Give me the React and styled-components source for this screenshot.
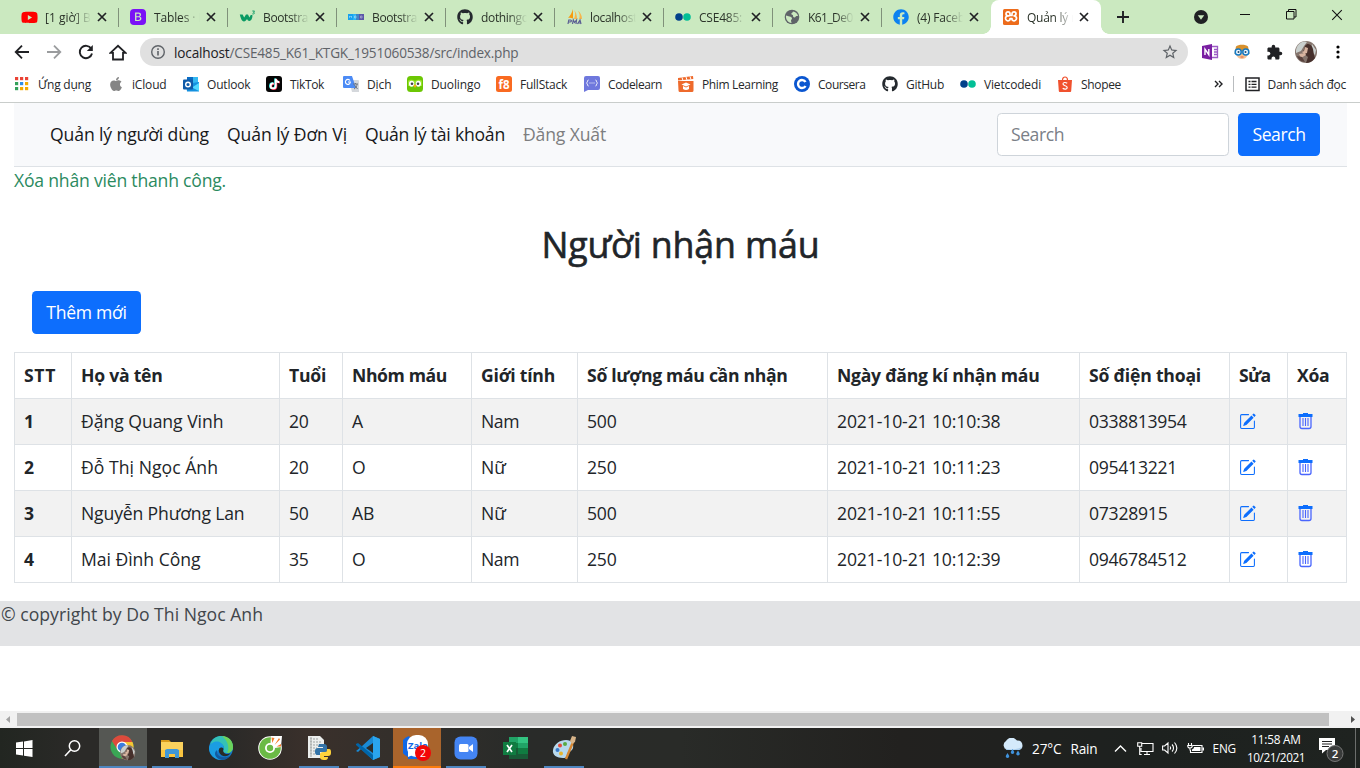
import React, { useLayoutEffect, useRef, useState } from "react";
import styled, { createGlobalStyle, css } from "styled-components";
import { FaApple, FaGithub, FaYoutube, FaTiktok, FaFacebook } from "react-icons/fa";
import { BsBootstrapFill, BsPencilSquare } from "react-icons/bs";
import { MdStarBorder, MdExtension } from "react-icons/md";

const Global = createGlobalStyle`
  * { box-sizing: border-box; }
  html, body { margin: 0; padding: 0; overflow: hidden; background: #fff; }
  body { font-family: "Open Sans", "Noto Sans", sans-serif; color: #212529; }
  svg { display: block; flex: none; }
`;

const Fitted = styled.span`
  display: inline-block;
  white-space: nowrap;
`;

/* Tightens or loosens the tracking so that a label takes the given width. */
function Fit({ w, children }) {
  const ref = useRef(null);
  const [spacing, setSpacing] = useState(0);
  useLayoutEffect(() => {
    const natural = ref.current.getBoundingClientRect().width;
    setSpacing((w - natural) / String(children).length);
  }, [w, children]);
  return <Fitted ref={ref} style={{ letterSpacing: spacing + "px" }}>{children}</Fitted>;
}

const Screen = styled.div`
  width: 1360px;
  height: 768px;
  display: flex;
  flex-direction: column;
  overflow: hidden;
  background: #fff;
`;

/* ---------- browser chrome ---------- */
const TabStrip = styled.div`
  height: 34px;
  flex: none;
  display: flex;
  padding-left: 10px;
  background: #cbe9c0;
`;
const TabBox = styled.div`
  width: ${p => (p.$active ? 110 : 109)}px;
  flex: none;
  height: 34px;
  display: flex;
  align-items: center;
  padding-left: 11px;
  position: relative;
  font-size: 12px;
  color: #2b3329;
  ${p => p.$active && css`
    background: #fff;
    border-radius: 8px 8px 0 0;
    padding-left: 12px;
    &::before, &::after {
      content: "";
      position: absolute;
      bottom: 0;
      width: 8px;
      height: 8px;
    }
    &::before { left: -8px; background: radial-gradient(circle at 0 0, transparent 7.5px, #fff 8px); }
    &::after { right: -8px; background: radial-gradient(circle at 100% 0, transparent 7.5px, #fff 8px); }
  `}
`;
const TabIcon = styled.span`
  width: 16px;
  height: 16px;
  flex: none;
  display: flex;
  align-items: center;
  justify-content: center;
`;
const TabTitle = styled.span`
  width: 46px;
  margin: 0 6px 0 8px;
  overflow: hidden;
  white-space: nowrap;
  flex: none;
  -webkit-mask-image: linear-gradient(90deg, #000 60%, transparent 100%);
  mask-image: linear-gradient(90deg, #000 60%, transparent 100%);
`;
const TabLine = styled.i`
  position: absolute;
  right: 0;
  top: 8px;
  width: 1px;
  height: 19px;
  background: #80917a;
`;
const NewTab = styled.div`
  width: 44px;
  height: 34px;
  display: flex;
  align-items: center;
  justify-content: center;
`;
const DropSlot = styled.div`
  margin-left: auto;
  width: 42px;
  height: 34px;
  display: flex;
  align-items: center;
  justify-content: center;
`;
const WinButton = styled.div`
  width: 46px;
  height: 29px;
  display: flex;
  align-items: center;
  justify-content: center;
`;
const Toolbar = styled.div`
  height: 36px;
  flex: none;
  display: flex;
  align-items: center;
  padding: 0 6px;
`;
const ToolButton = styled.div`
  width: 32px;
  height: 32px;
  flex: none;
  display: flex;
  align-items: center;
  justify-content: center;
  color: #202124;
`;
const Omnibox = styled.div`
  flex: 1;
  height: 28px;
  margin: 0 6px;
  border-radius: 14px;
  background: #e0e0e0;
  display: flex;
  align-items: center;
  padding: 0 9px 0 10px;
  font-size: 13.6px;
  color: #5f6368;
  svg:last-child { margin-left: auto; }
`;
const Url = styled.span`
  display: flex;
  margin-left: 8px;
`;
const Host = styled.span`
  color: #202124;
`;
const Bookmarks = styled.div`
  height: 33px;
  flex: none;
  display: flex;
  align-items: center;
  padding: 0 14px 4px;
  border-bottom: 1px solid #c9cdcb;
  font-size: 12px;
  color: #26282b;
`;
const Bookmark = styled.div`
  width: ${p => p.$w}px;
  flex: none;
  display: flex;
  align-items: center;
  gap: 8px;
`;
const BookmarkEnd = styled.div`
  margin-left: auto;
  display: flex;
  align-items: center;
`;
const BarLine = styled.i`
  width: 1px;
  height: 16px;
  margin: 0 11px 0 10px;
  background: #b9bcbf;
`;
const ListIconBox = styled.span`
  margin-right: 8px;
`;

/* ---------- page ---------- */
const Page = styled.main`
  height: 608px;
  flex: none;
  font-size: 17.6px;
  line-height: 26px;
`;
const Container = styled.div`
  padding: 0 13px 0 14px;
`;
const Navbar = styled.nav`
  height: 64px;
  display: flex;
  align-items: center;
  padding: 0 27px 1px 36px;
  background: #f8f9fb;
  border-bottom: 1px solid #dee2e6;
`;
const NavLink = styled.a`
  margin-right: ${p => (p.$last ? 0 : 18)}px;
  color: ${p => (p.$muted ? "#7d7e80" : "#17181a")};
`;
const SearchForm = styled.form`
  margin-left: auto;
  display: flex;
  gap: 9px;
`;
const SearchField = styled.div`
  width: 232px;
  height: 43px;
  padding: 7px 13px;
  border: 1px solid #ced4da;
  border-radius: 4.4px;
  background: #fff;
  color: #7a8087;
`;
const Button = styled.button`
  width: ${p => p.$w}px;
  height: 43px;
  padding: 0 0 1px;
  border: 0;
  border-radius: 4.4px;
  background: #0d6efd;
  color: #fff;
  font: inherit;
  text-align: center;
`;
const Notice = styled.div`
  height: 27px;
  color: #2b8a60;
`;
const Title = styled.h1`
  margin: 28px 0 0;
  height: 45px;
  font-size: 35.8px;
  line-height: 44px;
  font-weight: 500;
  -webkit-text-stroke: 0.6px currentColor;
  text-align: center;
`;
const Actions = styled.div`
  padding: 24px 0 18px 18px;
`;
const Table = styled.table`
  width: 1332px;
  table-layout: fixed;
  border-collapse: collapse;
`;
const Row = styled.tr`
  height: 46px;
  background: ${p => (p.$striped ? "#f2f2f2" : "#fff")};
`;
const cell = css`
  padding: 0 0 1px 9px;
  border: 1px solid #dee2e6;
  text-align: left;
  white-space: nowrap;
  vertical-align: middle;
`;
const Head = styled.th`
  ${cell}
  font-weight: 700;
`;
const Cell = styled.td`
  ${cell}
`;
const ActionIcon = styled.a`
  display: block;
  padding-left: ${p => p.$inset || 0}px;
  color: #0d6efd;
`;
const Footer = styled.footer`
  margin-top: 18px;
  height: 45px;
  padding: 0 0 0 1px;
  background: #e2e3e5;
  color: #41464b;
`;
const ScrollBar = styled.div`
  height: 17px;
  flex: none;
  display: flex;
  align-items: center;
  justify-content: space-between;
  background: #f1f1f1;
  padding: 0 5px 0 6px;
`;
const Thumb = styled.div`
  width: 1312px;
  height: 13px;
  margin: 0 auto 0 7px;
  background: #c1c1c1;
`;

/* ---------- taskbar ---------- */
const Taskbar = styled.div`
  height: 40px;
  flex: none;
  display: flex;
  color: #fff;
  background: linear-gradient(90deg, #222621 0, #2b2a28 80px, #2b2a28 230px, #3a302b 310px, #332f2b 400px, #292b29 520px, #292b28 680px, #22211f 900px, #1d211f 1150px, #1f2320 1360px);
`;
const Tile = styled.div`
  width: ${p => p.$w || 49}px;
  height: 40px;
  flex: none;
  display: flex;
  align-items: center;
  justify-content: center;
  border-left: 1px solid transparent;
  background: ${p => p.$bg || "transparent"};
  background-clip: padding-box;
  position: relative;
  &::after {
    content: "";
    position: absolute;
    bottom: 0;
    left: ${p => (p.$wide ? 0 : 4)}px;
    right: ${p => (p.$wide ? 0 : 4)}px;
    height: 2px;
    background: ${p => p.$line || "transparent"};
  }
`;
const Tiles = styled.div`
  display: flex;
  margin-left: 2px;
`;
const Tray = styled.div`
  margin-left: auto;
  display: flex;
  align-items: center;
  font-size: 13.6px;
`;
const Weather = styled.div`
  display: flex;
  align-items: center;
  gap: 9px;
  margin-right: 16px;
`;
const TrayIcons = styled.div`
  display: flex;
  align-items: center;
  gap: 8px;
`;
const TrayUpBox = styled.span`
  margin-right: 2px;
`;
const Lang = styled.div`
  font-size: 11.8px;
  margin: 0 9px 0 9px;
`;
const Clock = styled.div`
  width: 62px;
  font-size: 11.8px;
  line-height: 18px;
  text-align: center;
  margin-right: 12px;
`;
const AlertSlot = styled.div`
  padding-top: 5px;
`;
const PeekLine = styled.i`
  width: 1px;
  height: 40px;
  margin: 0 4px 0 11px;
  background: #6c6e6c;
`;

/* ---------- drawings ---------- */
const CloseX = ({ s = 9, c = "#202124", t = 1.7 }) => (
  <svg width={s} height={s} viewBox="0 0 10 10"><path d="M1 1l8 8M9 1l-8 8" stroke={c} strokeWidth={t} /></svg>
);
const W3 = () => (
  <svg width="17" height="14" viewBox="0 0 17 14"><path d="M.8 4.500h2.800l1.600 3 1.800-3h2l1.400 3 1.300-2.500h1.600c.6 2-.8 6-2.900 6-1.200 0-1.800-1-2.400-2-1 1.500-1.700 2.500-3 2.500C2.500 11.500 1.500 7 .8 4.500z" fill="#0a9a63" /><path d="M13.300 1h2.200l-1 1.400c1.600 0 1.300 2-1.200 1.500" fill="none" stroke="#0a9a63" strokeWidth=".9" /></svg>
);
const TinyBlocks = () => (
  <svg width="16" height="16"><path fill="#17a2ef" d="M0 5h5v6H0z" /><path fill="#29b4f5" d="M5 5h3v6H5z" /><path fill="#3f86c8" d="M8 5h3v6H8z" /><path fill="#5b57a8" d="M11 5h5v6h-5z" /><path d="M1.500 9V7l1 1 1-1v2M6.500 7v2h1.500V7zM12.500 7v2h1.500V7z" fill="none" stroke="#fff" strokeOpacity=".5" strokeWidth=".7" /></svg>
);
const Pma = () => (
  <svg width="17" height="16" viewBox="0 0 17 16"><path fill="#f89c0e" d="M7 0c-1 4-3 7-5 9 2-.5 3.500 0 5 .5z" /><path fill="#f7b64c" d="M8 1c2 3 1 6 0 9h3C11 6 10 3 8 1zM12 2c2 3 2 5 1 8h3C16 6 14 3 12 2z" /><path d="M2 15l.8-4h1.700c1.500 0 1 2-.5 2H2.500M6.500 15l.8-4 1.200 2.500L10.500 11 10 15M11.500 15l2.500-4 1 4M12.500 14h2" fill="none" stroke="#5b5f93" strokeWidth="1.200" /></svg>
);
const TwoDots = () => (
  <svg width="16" height="16"><circle cx="4" cy="8" r="3.800" fill="#02418a" /><circle cx="12" cy="8" r="3.800" fill="#02bf96" /></svg>
);
const Globe = () => (
  <svg width="16" height="16"><circle cx="8" cy="8" r="7.300" fill="#5f6368" /><path d="M2 6.500c1.500 0 2 1 3.500 1S8 8.500 8 9.500s-1 1-1 2 .5 1.500.5 2.500C4 13.500 1.500 10.500 2 6.500zM9 2.500c2.500.3 4.500 2 5 4.500h-1.500c-1 0-.8 1.500-2 1.500S9 7.500 9 6.500s-1.700-.5-1.700-1.700S9 4 9 2.500z" fill="#cbe9c0" /></svg>
);
const Xampp = () => (
  <svg width="16" height="16"><rect width="16" height="16" rx="1.500" fill="#ed6c1c" /><path d="M6.500 6.800L5 6.800A2 2 0 1 1 7 4.800V6.500h2V4.800A2 2 0 1 1 11 6.800a2.500 2.500 0 1 1-2 4V9.500H7v1.300a2.500 2.500 0 1 1-2-4" fill="none" stroke="#fff" strokeWidth="1.700" strokeLinejoin="round" /></svg>
);
const Apps = () => (
  <svg width="16" height="16">
    {["#ea4335", "#ea4335", "#ea4335", "#34a05a", "#2f8de8", "#f4a900", "#34a05a", "#f4a900", "#f4a900"].map((c, i) => (
      <rect key={i} x={1 + (i % 3) * 5} y={1 + Math.floor(i / 3) * 5} width="3.200" height="3.200" fill={c} />
    ))}
  </svg>
);
const Outlook = () => (
  <svg width="16" height="16"><path fill="#35b8f1" d="M4 1h11v9H4z" /><path fill="#0a6cc4" d="M4 1h6v5H4z" /><path fill="#1490df" d="M3 8l13-2v9.500H4z" /><path fill="#50d9ff" d="M16 7v8l-7-3.500z" /><rect y="3.500" width="10" height="10" rx="1" fill="#0f5aa8" /><circle cx="5" cy="8.500" r="2.300" fill="none" stroke="#fff" strokeWidth="1.400" /></svg>
);
const TikTok = () => (
  <svg width="16" height="16" viewBox="0 0 16 16"><rect width="16" height="16" rx="3" fill="#050505" /><g transform="translate(3 2.500)"><FaTiktok size={11} x="-.6" y="-.3" color="#25f4ee" /><FaTiktok size={11} x=".6" y=".4" color="#fe2c55" /><FaTiktok size={11} color="#fff" /></g></svg>
);
const Translate = () => (
  <svg width="16" height="16"><path fill="#d5d8dc" d="M6 4h9a1 1 0 0 1 1 1v11H9z" /><path fill="#4c8bf5" d="M1 0h8l4 12H1a1 1 0 0 1-1-1V1a1 1 0 0 1 1-1z" /><path d="M7 4.500A2.500 2.500 0 1 0 7.400 6H5" fill="none" stroke="#fff" strokeWidth="1.100" /><path d="M10 8h5M12.500 7v1M11 13c2-1 3-3 3-5M11.500 9l3 4" stroke="#6d7580" fill="none" /></svg>
);
const Duolingo = () => (
  <svg width="16" height="16"><rect width="16" height="16" rx="3.500" fill="#6cc704" /><path fill="#9be32c" d="M1 5c2-2 5-1 7 0 2-1 5-2 7 0v5H1z" /><ellipse cx="4.600" cy="7.700" rx="2.600" ry="3" fill="#fff" /><ellipse cx="11.400" cy="7.700" rx="2.600" ry="3" fill="#fff" /><circle cx="5" cy="7.800" r="1.300" fill="#444" /><circle cx="11" cy="7.800" r="1.300" fill="#444" /><path fill="#f7a918" d="M6.300 9.500L8 8.500l1.700 1L8 12z" /></svg>
);
const F8 = () => (
  <svg width="16" height="16"><rect width="16" height="16" rx="2.500" fill="#f96a21" /><text x="8" y="12.500" fontSize="11.500" fontWeight="700" fontFamily="Open Sans" textAnchor="middle" fill="#fff">f8</text></svg>
);
const Codelearn = () => (
  <svg width="16" height="16"><path fill="#6f78dd" d="M2 0h12a2 2 0 0 1 2 2v10a2 2 0 0 1-2 2H4l-4 2V2a2 2 0 0 1 2-2z" /><path d="M4.500 4C3 4 4 6.500 2.500 7 4 7.500 3 10 4.500 10M11.500 4c1.500 0 .5 2.500 2 3-1.500.5-.5 3-2 3" fill="none" stroke="#fff" /><path d="M5.500 7h5" stroke="#fff" strokeDasharray="1 1" /></svg>
);
const Film = () => (
  <svg width="16" height="16"><path fill="#ee6a2c" d="M0 5h15.500v9.500a1.500 1.500 0 0 1-1.500 1.500H2a1.500 1.500 0 0 1-1.500-1.500zM0 2l15-2 .3 3L0 4.500z" /><path d="M4 1.500l1 3M8 1l1 3M12 .5l1 3" stroke="#fff" /><path fill="#fff" d="M3.500 8.500L8 6.500l4.500 2L8 10.500zM5 10l3 1.500 3-1.500v3c-2 1.300-4 1.300-6 0z" /></svg>
);
const Coursera = () => (
  <svg width="16" height="16"><circle cx="8" cy="8" r="8" fill="#0a56d0" /><path d="M11.500 6A4 4 0 1 0 11.500 10" fill="none" stroke="#fff" strokeWidth="2.400" /></svg>
);
const Shopee = () => (
  <svg width="16" height="16"><path fill="#f0512e" d="M1 4h14l-.8 11a1 1 0 0 1-1 1H2.800a1 1 0 0 1-1-1z" /><path d="M5.500 4c0-4 5-4 5 0" fill="none" stroke="#f0512e" strokeWidth="1.200" /><path d="M10.200 7.300C8.500 6 6 6.300 6 8c0 2 4.200 1.500 4.200 3.500 0 1.900-2.700 2.100-4.500.8" fill="none" stroke="#fff" strokeWidth="1.200" /></svg>
);
const ReadingList = () => (
  <svg width="15" height="15"><rect x="1" y="1" width="13" height="12.500" fill="none" stroke="#202124" strokeWidth="1.500" /><path d="M3.500 4.500h2M3.500 7.300h2M3.500 10.200h2M6.500 4.500h5M6.500 7.300h5M6.500 10.200h5" stroke="#202124" strokeWidth="1.300" /></svg>
);
const Arrow = ({ flip, c }) => (
  <svg width="16" height="16"><path transform={flip ? "translate(16 0) scale(-1 1)" : undefined} d="M15 8H2M8 1.700L1.700 8 8 14.300" fill="none" stroke={c} strokeWidth="1.800" /></svg>
);
const Reload = () => (
  <svg width="16" height="16"><path d="M13.300 4.800A6.200 6.200 0 1 0 14 9.500" fill="none" stroke="#202124" strokeWidth="1.900" /><path d="M14.800 1v6H8.800z" fill="#202124" /></svg>
);
const Home = () => (
  <svg width="18" height="17"><path d="M1.500 8.800L9 1.800l7.500 7H14V15.500H4V8.800z" fill="none" stroke="#202124" strokeWidth="1.800" /></svg>
);
const Info = () => (
  <svg width="16" height="16"><circle cx="8" cy="8" r="6.300" fill="none" stroke="#5f6368" strokeWidth="1.400" /><path d="M8 7v4.500M8 4.300v1.600" stroke="#5f6368" strokeWidth="1.600" /></svg>
);
const OneNote = () => (
  <svg width="17" height="16"><path d="M9.500 2.500h6v11h-6M12 5.500h3.500M12 8h3.500M12 10.500h3.500" fill="none" stroke="#9b5bc4" strokeWidth="1.300" /><path fill="#7a1fa2" d="M0 2l10-2v16L0 14z" /><path d="M3 11V5.200l3.800 5.500V5" fill="none" stroke="#fff" strokeWidth="1.400" /></svg>
);
const Owl = () => (
  <svg width="16" height="16"><path fill="#d8912c" d="M2 2.500C4 0 12 0 14 2.500L15.500 10H.5z" /><path fill="#f3c293" d="M2.500 7h11v4c-1 3-3.500 4-5.500 4s-4.500-1-5.500-4z" /><g fill="#e9f6ff" stroke="#157ac4" strokeWidth="1.500"><circle cx="4.200" cy="8" r="3" /><circle cx="11.800" cy="8" r="3" /></g><circle cx="4.500" cy="8" r="1" fill="#23496b" /><circle cx="11.500" cy="8" r="1" fill="#23496b" /><path d="M6.500 13h3" stroke="#e3603f" /></svg>
);
const Avatar = ({ s = 22 }) => (
  <svg width={s} height={s} viewBox="0 0 22 22"><circle cx="11" cy="11" r="11" fill="#85756d" /><path fill="#c9cfcd" d="M4 3c3-3 7-3 8-2L9 5 6 10l-5 2c-.5-4 1-7 3-9zM17 3l4 6-1 5-4-4z" /><path fill="#46302c" d="M10 5c3-4 7-1 8 3l1 6 1 3c-3 4-6 5-9 5l2-6-5-4z" /><path fill="#d7b4a0" d="M10 6l3 1-1 5-3 1-2-2 2-1zM4 13l6-1 1 2-5 3z" /><path fill="#5a433e" d="M2 15l5 1 3 5c-4 0-7-3-8-6z" /></svg>
);
const Dots = () => (
  <svg width="4" height="14"><circle cx="2" cy="2" r="1.600" /><circle cx="2" cy="7" r="1.600" /><circle cx="2" cy="12" r="1.600" /></svg>
);
const Trash = () => (
  <svg width="16" height="17" fill="#0d6efd"><path d="M5 0h5v1h4.500v3H.5V1H5z" /><path d="M2 4v9.500a2 2 0 0 0 2 2h7a2 2 0 0 0 2-2V4" fill="none" stroke="#4a66fd" strokeWidth="1.300" /><path d="M5 5v8M7.500 5v8M10 5v8" stroke="#4a66fd" strokeWidth="1.100" /></svg>
);
const Windows = () => (
  <svg width="17" height="17"><path fill="#fff" d="M0 2.600l7-1V8H0zM8 1.400L16.500 0v8H8zM0 9h7v6.500l-7-1zM8 9h8.500v8L8 15.700z" /></svg>
);
const Magnifier = () => (
  <svg width="17" height="17"><circle cx="10.500" cy="6" r="5.200" fill="none" stroke="#fff" strokeWidth="1.500" /><path d="M6.800 9.800L1 16" stroke="#fff" strokeWidth="1.600" /></svg>
);
const Chrome = () => (
  <svg width="26" height="26" viewBox="0 0 26 26"><circle cx="12" cy="12" r="11.500" fill="#3aa655" /><path fill="#dd4a3c" d="M2 6a11.500 11.500 0 0 1 20.500 1H12L7 14z" /><path fill="#f6c634" d="M12 7h10.500A11.500 11.500 0 0 1 11.500 23.500L17 15z" /><circle cx="12" cy="12" r="5.500" fill="#fff" /><circle cx="12" cy="12" r="4.300" fill="#3b7de0" /><g transform="translate(10 10)"><Avatar s={15.5} /></g></svg>
);
const Explorer = () => (
  <svg width="22" height="19"><path fill="#d99b1d" d="M0 1h8l2 2h-10z" /><path fill="#fbd15d" d="M0 3h22v15H0z" /><path fill="#f9c440" d="M0 11h22v7H0z" /><path fill="#3f97d8" d="M4 11l2-1h10l2 1v8h-4v-4H8v4H4z" /></svg>
);
const Edge = () => (
  <svg width="24" height="24"><circle cx="12" cy="12" r="12" fill="#1478c8" /><path fill="#35c1b6" d="M1 9C3 2 8 0 12 0c7 0 12 5 12 11 0 4-3 6-6 6-3 0-4-1-4-2 1-1 1.500-3 .5-5C12 6 5 5 1 9z" /><path fill="#6bd35b" d="M13 0c7 0 11 5 11 11 0 4-3 6-6 6 3-5 1-12-5-17z" /><path fill="#1b9de2" d="M0 12C1 6 8 4 12 7c3 2 3.500 5 2 8-2-2-6-2-6 2 0 3 2 5 5 7C5 24 0 18 0 12z" /><path fill="#135aa0" d="M8 14c-1 6 5 9 13 6-3 4-7 4-10 3.500C5 21 5 16 8 14z" /><path fill="#292b28" d="M10 13c1-2 4-2 4.500 0-.8 1.500-.5 3 1.500 4.500 2 1 4 .5 5.500-.5-2 3.500-6 4-9 2.200C10 17.500 9.500 15 10 13z" /></svg>
);
const CocCoc = () => (
  <svg width="25" height="24"><circle cx="12" cy="12" r="11.800" fill="#fff" /><circle cx="12" cy="12" r="10.800" fill="#6aba45" /><circle cx="12" cy="12" r="5" fill="#fff" /><circle cx="12" cy="12" r="3.200" fill="#6aba45" /><path fill="#fff" d="M12.500 7l.5-7h11l-1 11-6 1z" /><path fill="#f47b2b" d="M13.500 1.500l3 .5-2.200 5zM21 2l1 1.500-5.500 5.500zM23 8v2.500l-4.500 0z" /></svg>
);
const PythonDoc = () => (
  <svg width="24" height="24"><path fill="#eceeed" d="M1 0h12l4 4v18H1z" /><path d="M3 3h9M3 6h11M3 9h8M3 12h7M3 15h7M3 18h7M4 1v20" stroke="#9da1a0" strokeDasharray="2 1" /><path fill="#3273a8" d="M12 8h5c2 0 3 1 3 3v3c0 2-1 2-3 2h-4v3h-2c-3 0-3-2-3-4s1-3 3-3h5v-1h-5z" /><path fill="#ffd43b" d="M20 13h2c2 0 2 2 2 4s-1 3-3 3h-4v1h4c0 3-2 3-4 3-3 0-4-1-4-3v-3c0-1 1-2 3-2h2c2 0 2-1 2-3z" /></svg>
);
const VsCode = () => (
  <svg width="24" height="24"><path fill="#1a8ad4" d="M17 0l7 3v18l-7 3L5 13 2 16l-2-1 5-4z" /><path fill="#0065a9" d="M0 8l2-1 15 12v5L0 9z" /><path fill="#2b2d2b" d="M17 7v10l-7-5z" /><path fill="#2aa5ef" d="M17 0l7 3v18l-7 3z" /></svg>
);
const Zalo = () => (
  <svg width="28" height="26"><path fill="#1168e6" d="M6 1a11 11 0 0 0-1 21v2h15v-2z" /><rect x="4" y="0" width="21" height="22" rx="9" fill="#fff" /><path fill="#fff" d="M5 15v7l5-2z" /><text x="15" y="14" fontSize="9.500" fontWeight="700" fontFamily="Open Sans" textAnchor="middle" fill="#1168e6">Zalo</text><circle cx="20" cy="18" r="8" fill="#f20707" /><text x="20" y="22" fontSize="10.500" fontFamily="Open Sans" textAnchor="middle" fill="#fff">2</text></svg>
);
const Zoom = () => (
  <svg width="24" height="24"><rect x=".5" y=".5" width="23" height="23" rx="6" fill="#4485f4" /><rect x="5" y="8" width="9.500" height="8" rx="1.500" fill="#fff" /><path fill="#fff" d="M15 11l4-3v8l-4-3z" /></svg>
);
const Excel = () => (
  <svg width="25" height="22"><path fill="#21a366" d="M6 0h19v22H6z" /><path fill="#33c481" d="M15 0h10v6H15z" /><path fill="#185c37" d="M6 11h9v11H6z" /><path fill="#107c41" d="M6 6h9v5H6zM15 11h10v6H15z" /><path fill="#185c37" d="M15 17h10v5H15z" /><rect y="5" width="13" height="13" fill="#107c41" /><path d="M4 8l5 7M9 8l-5 7" stroke="#fff" strokeWidth="1.700" /></svg>
);
const Paint = () => (
  <svg width="25" height="24"><path fill="#b8d9ed" d="M1 14C2 8 8 4 14 4s8 4 7 8-6 4-6 6 0 4-4 4C5 22 0 19 1 14z" /><circle cx="5.500" cy="14" r="2" fill="#3579c8" /><circle cx="8" cy="9.500" r="2" fill="#e24a3b" /><circle cx="13" cy="8" r="2" fill="#58aa42" /><circle cx="9" cy="17.500" r="2" fill="#e6b52e" /><path d="M14 23l7-17" stroke="#d58632" strokeWidth="2.400" /><path fill="#d7b489" d="M18 5l2-5 4 1-1 5-3 2z" /></svg>
);
const RainCloud = () => (
  <svg width="22" height="21"><path fill="#d4eafb" d="M6 12a5 5 0 0 1-1-9 6.500 6.500 0 0 1 11-.5c3-.5 5.500 1.500 5.500 5S19 12 17 12z" /><path fill="#a9cdec" d="M3 10c4 2 12 2 18-1-1 2-2 3-4 3H6z" /><path fill="#3f92dc" d="M6.500 15l1.500 2.500a1.700 1.700 0 1 1-3 0zM11.500 11l1.500 2.500a1.700 1.700 0 1 1-3 0zM17 12.500l1.500 2.500a1.700 1.700 0 1 1-3 0z" /></svg>
);
const TrayUp = () => <svg width="13" height="9"><path d="M1 7.500L6.500 2 12 7.500" fill="none" stroke="#fff" strokeWidth="1.400" /></svg>;
const Network = () => (
  <svg width="17" height="15"><path d="M5 2.500h11v8H4V7M10 10.500v3M7 13.500h6M.7 1.700h4v3.500h-4zM2.700 5v8.500h2" fill="none" stroke="#fff" strokeWidth="1.100" /></svg>
);
const Speaker = () => (
  <svg width="17" height="14"><path d="M.6 5h2L6 2v10L2.600 9h-2zM8 5.500c.8 1 .8 2 0 3M10 3.500c2 2 2 5 0 7M12.500 1.500c3 3.500 3 7.500 0 11" fill="none" stroke="#fff" strokeWidth="1.100" /></svg>
);
const Battery = () => (
  <svg width="17" height="13"><path d="M6 3.500h9v7H3.500V8M1.500 1v2.500M4.500 1v2.500M.7 3.500h4.600c0 2-1 2.500-2.300 2.500S.7 5.500.7 3.500zM3 6v2.500" fill="none" stroke="#fff" strokeWidth="1.100" /><path fill="#fff" d="M7 5h6.500v4H5V7.500c1.500-.5 2-1.500 2-2.500zM15.500 5.500H17v3h-1.500z" /></svg>
);
const Notifications = () => (
  <svg width="25" height="25"><path fill="#fff" d="M0 0h16v12H7l-4 3.500V12H0z" /><path d="M3 3.500h10M3 6h10M3 8.500h7" stroke="#222" strokeWidth="1.100" /><circle cx="16" cy="15.500" r="8" fill="#393b3a" stroke="#777" /><text x="16" y="19.500" fontSize="11.500" fontFamily="Open Sans" fontWeight="600" textAnchor="middle" fill="#fff">2</text></svg>
);

/* ---------- data ---------- */
const tabs = [
  { icon: <FaYoutube size={17} color="#f00" />, title: "[1 giờ] Bo", w: 53 },
  { icon: <BsBootstrapFill size={16} color="#7a11f6" />, title: "Tables · Bo", w: 59 },
  { icon: <W3 />, title: "Bootstrap", w: 52 },
  { icon: <TinyBlocks />, title: "Bootstrap", w: 52 },
  { icon: <FaGithub size={16} color="#24292e" />, title: "dothingoc", w: 53 },
  { icon: <Pma />, title: "localhost", w: 47 },
  { icon: <TwoDots />, title: "CSE485:", w: 43 },
  { icon: <Globe />, title: "K61_De01", w: 51 },
  { icon: <FaFacebook size={16} color="#0d82f0" />, title: "(4) Facebook", w: 68 },
  { icon: <Xampp />, title: "Quản lý n", w: 51, active: true },
];
const bookmarks = [
  [<Apps />, "Ứng dụng", 53, 94],
  [<FaApple size={16} color="#858585" />, "iCloud", 34.5, 75],
  [<Outlook />, "Outlook", 43.5, 83],
  [<TikTok />, "TikTok", 34, 77],
  [<Translate />, "Dịch", 24.5, 64],
  [<Duolingo />, "Duolingo", 49.5, 89],
  [<F8 />, "FullStack", 47, 88],
  [<Codelearn />, "Codelearn", 54, 94],
  [<Film />, "Phim Learning", 76, 116],
  [<Coursera />, "Coursera", 47.5, 88],
  [<FaGithub size={16} color="#24292e" />, "GitHub", 38, 78],
  [<TwoDots />, "Vietcodedi", 57, 97],
  [<Shopee />, "Shopee", 40, 70],
];
const columns = [
  ["STT", 32, 57], ["Họ và tên", 81.5, 208], ["Tuổi", 37, 63], ["Nhóm máu", 95, 129], ["Giới tính", 74, 106],
  ["Số lượng máu cần nhận", 200.5, 250], ["Ngày đăng kí nhận máu", 202.5, 252], ["Số điện thoại", 112, 150], ["Sửa", 31.5, 58], ["Xóa", 32.5, 59],
];
const people = [
  [["1", 10], ["Đặng Quang Vinh", 142.5], ["20", 19.5], ["A", 12], ["Nam", 38], ["500", 29.500], ["2021-10-21 10:10:38", 163.5], ["0338813954", 97.5]],
  [["2", 10], ["Đỗ Thị Ngọc Ánh", 137], ["20", 19.5], ["O", 14], ["Nữ", 25], ["250", 29.500], ["2021-10-21 10:11:23", 163.5], ["095413221", 88]],
  [["3", 10], ["Nguyễn Phương Lan", 163.5], ["50", 19.5], ["AB", 22.5], ["Nữ", 25], ["500", 29.500], ["2021-10-21 10:11:55", 163.5], ["07328915", 78.5]],
  [["4", 10], ["Mai Đình Công", 119.5], ["35", 19.5], ["O", 14], ["Nam", 38], ["250", 29.500], ["2021-10-21 10:12:39", 163.5], ["0946784512", 97.5]],
];
const apps = [
  { icon: <Chrome />, bg: "#555753", line: "#4e86c0", wide: true },
  { icon: <Explorer />, line: "#4e86c0" },
  { icon: <Edge /> },
  { icon: <CocCoc /> },
  { icon: <PythonDoc />, line: "#4e86c0" },
  { icon: <VsCode />, line: "#4e86c0" },
  { icon: <Zalo />, bg: "#a9642c", line: "#fb7b0c", wide: true },
  { icon: <Zoom />, line: "#4e86c0" },
  { icon: <Excel /> },
  { icon: <Paint />, line: "#4e86c0" },
];

function BrowserChrome() {
  return (
    <>
      <TabStrip>
        {tabs.map((t, i) => (
          <TabBox key={i} $active={t.active}>
            <TabIcon>{t.icon}</TabIcon>
            <TabTitle><Fit w={t.w}>{t.title}</Fit></TabTitle>
            <CloseX s={10} />
            {i < 8 && <TabLine />}
          </TabBox>
        ))}
        <NewTab><svg width="12" height="12"><path d="M6 0v12M0 6h12" stroke="#202124" strokeWidth="1.900" /></svg></NewTab>
        <DropSlot><svg width="14" height="14"><circle cx="7" cy="7" r="7" fill="#202124" /><path fill="#cbe9c0" d="M3.800 5.300h6.400L7 9.800z" /></svg></DropSlot>
        <WinButton><svg width="10" height="2"><path d="M0 .5h10" stroke="#111" /></svg></WinButton>
        <WinButton><svg width="11" height="11"><path d="M.5 2.500h7.500V10H.5zM2.500 2.500V.5H10V8H8" fill="none" stroke="#111" /></svg></WinButton>
        <WinButton><CloseX s={12} c="#111" t={0.9} /></WinButton>
      </TabStrip>
      <Toolbar>
        <ToolButton><Arrow c="#202124" /></ToolButton>
        <ToolButton><Arrow flip c="#9a9c9e" /></ToolButton>
        <ToolButton><Reload /></ToolButton>
        <ToolButton><Home /></ToolButton>
        <Omnibox>
          <Info />
          <Url><Host><Fit w={55.5}>localhost</Fit></Host><Fit w={289}>/CSE485_K61_KTGK_1951060538/src/index.php</Fit></Url>
          <MdStarBorder size={18} color="#5f6368" />
        </Omnibox>
        <ToolButton><OneNote /></ToolButton>
        <ToolButton><Owl /></ToolButton>
        <ToolButton><MdExtension size={17} /></ToolButton>
        <ToolButton><Avatar /></ToolButton>
        <ToolButton><Dots /></ToolButton>
      </Toolbar>
      <Bookmarks>
        {bookmarks.map(([icon, label, w, total]) => (
          <Bookmark key={label} $w={total}>{icon}<Fit w={w}>{label}</Fit></Bookmark>
        ))}
        <BookmarkEnd>
          <svg width="9" height="8"><path d="M1 1l3 3-3 3M5 1l3 3-3 3" fill="none" stroke="#202124" strokeWidth="1.400" /></svg>
          <BarLine />
          <ListIconBox><ReadingList /></ListIconBox>
          <Fit w={78.5}>Danh sách đọc</Fit>
        </BookmarkEnd>
      </Bookmarks>
    </>
  );
}

function RecipientsPage() {
  return (
    <Page>
      <Container>
        <Navbar>
          <NavLink><Fit w={159}>Quản lý người dùng</Fit></NavLink>
          <NavLink><Fit w={120}>Quản lý Đơn Vị</Fit></NavLink>
          <NavLink><Fit w={140}>Quản lý tài khoản</Fit></NavLink>
          <NavLink $muted $last><Fit w={83}>Đăng Xuất</Fit></NavLink>
          <SearchForm>
            <SearchField><Fit w={53}>Search</Fit></SearchField>
            <Button type="button" $w={82}><Fit w={53}>Search</Fit></Button>
          </SearchForm>
        </Navbar>
        <Notice><Fit w={212}>Xóa nhân viên thanh công.</Fit></Notice>
        <Title><Fit w={278}>Người nhận máu</Fit></Title>
        <Actions><Button $w={109}><Fit w={80.5}>Thêm mới</Fit></Button></Actions>
        <Table>
          <colgroup>{columns.map(([name, , w]) => <col key={name} width={w} />)}</colgroup>
          <thead>
            <Row>{columns.map(([name, w]) => <Head key={name}><Fit w={w}>{name}</Fit></Head>)}</Row>
          </thead>
          <tbody>
            {people.map((person, i) => (
              <Row key={i} $striped={i % 2 === 0}>
                {person.map(([text, w], j) => {
                  const As = j === 0 ? Head : Cell;
                  return <As key={j}><Fit w={w}>{text}</Fit></As>;
                })}
                <Cell><ActionIcon><BsPencilSquare size={17} /></ActionIcon></Cell>
                <Cell><ActionIcon $inset={1}><Trash /></ActionIcon></Cell>
              </Row>
            ))}
          </tbody>
        </Table>
      </Container>
      <Footer><Fit w={262}>© copyright by Do Thi Ngoc Anh</Fit></Footer>
    </Page>
  );
}

function DesktopTaskbar() {
  return (
    <Taskbar>
      <Tile $w={48}><Windows /></Tile>
      <Tile $w={48}><Magnifier /></Tile>
      <Tiles>
        {apps.map((a, i) => <Tile key={i} $bg={a.bg} $line={a.line} $wide={a.wide}>{a.icon}</Tile>)}
      </Tiles>
      <Tray>
        <Weather><RainCloud /><Fit w={29.5}>27°C</Fit><Fit w={27}>Rain</Fit></Weather>
        <TrayIcons><TrayUpBox><TrayUp /></TrayUpBox><Network /><Speaker /><Battery /></TrayIcons>
        <Lang><Fit w={23.5}>ENG</Fit></Lang>
        <Clock><Fit w={49.5}>11:58 AM</Fit><br /><Fit w={58}>10/21/2021</Fit></Clock>
        <AlertSlot><Notifications /></AlertSlot>
        <PeekLine />
      </Tray>
    </Taskbar>
  );
}

export default function App() {
  return (
    <Screen>
      <Global />
      <BrowserChrome />
      <RecipientsPage />
      <ScrollBar>
        <svg width="4" height="7"><path fill="#a3a3a3" d="M4 0v7L0 3.500z" /></svg>
        <Thumb />
        <svg width="4" height="7"><path fill="#505050" d="M0 0v7l4-3.500z" /></svg>
      </ScrollBar>
      <DesktopTaskbar />
    </Screen>
  );
}
